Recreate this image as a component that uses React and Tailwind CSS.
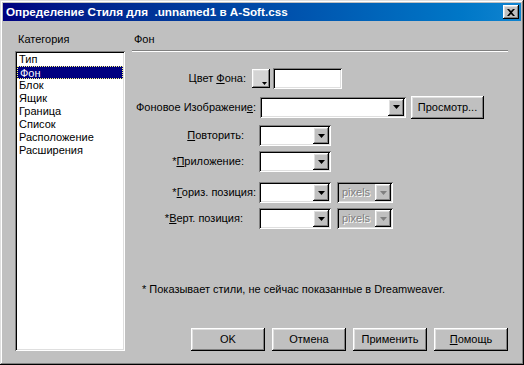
const raised =
  "shadow-[inset_-1px_-1px_#000,inset_1px_1px_#fff,inset_-2px_-2px_#808080,inset_2px_2px_#dfdfdf]";
const sunken =
  "shadow-[inset_1px_1px_#808080,inset_-1px_-1px_#fff,inset_2px_2px_#000,inset_-2px_-2px_#dfdfdf]";

function Arrow({ disabled }) {
  return (
    <svg width="7" height="4" viewBox="0 0 7 4">
      <path d="M0 0h7L3.5 4z" fill={disabled ? "#808080" : "#000"} />
    </svg>
  );
}

function Select({ className, disabled, value }) {
  return (
    <div
      className={`${sunken} ${className} flex h-[21px] items-stretch p-[2px] ${
        disabled ? "bg-[#c0c0c0]" : "bg-white"
      }`}
    >
      <div className="flex-1 pl-[3px] leading-[17px] text-[#808080] [text-shadow:1px_1px_#fff]">
        {value}
      </div>
      <div className={`${raised} flex w-[16px] items-center justify-center bg-[#c0c0c0]`}>
        <Arrow disabled={disabled} />
      </div>
    </div>
  );
}

function Button({ children, className = "" }) {
  return (
    <div
      className={`${raised} ${className} flex h-[23px] items-center justify-center bg-[#c0c0c0] text-[11px] text-black`}
    >
      {children}
    </div>
  );
}

const categories = ["Тип", "Фон", "Блок", "Ящик", "Граница", "Список", "Расположение", "Расширения"];

export default function App() {
  return (
    <div
      className={`flex h-[365px] w-[524px] flex-col bg-[#c0c0c0] p-[3px] text-[11px] text-black shadow-[inset_-1px_-1px_#000,inset_1px_1px_#dfdfdf,inset_-2px_-2px_#808080,inset_2px_2px_#fff]`}
      style={{ fontFamily: '"Liberation Sans", Arial, sans-serif' }}
    >
      {/* Title bar */}
      <div className="flex h-[18px] items-center justify-between bg-gradient-to-r from-[#000080] to-[#1084d0] pl-[3px] pr-[2px]">
        <span className="text-[11.7px] font-bold text-white">
          Определение Стиля для &nbsp;.unnamed1 в A-Soft.css
        </span>
        <div className={`${raised} flex h-[14px] w-[16px] items-center justify-center bg-[#c0c0c0]`}>
          <svg width="8" height="7" viewBox="0 0 8 7">
            <path d="M0 0h2l2 2 2-2h2L5 3.5 8 7H6L4 5 2 7H0l3-3.5z" fill="#000" />
          </svg>
        </div>
      </div>

      <div className="flex flex-1">
        {/* Category column */}
        <div className="ml-[12px] flex flex-col">
          <div className="mt-[12px] pl-[3px] leading-[13px]">Категория</div>
          <div className={`${sunken} mt-[5px] h-[300px] w-[110px] bg-white p-[2px]`}>
            {categories.map((c) => (
              <div
                key={c}
                className={`h-[13px] pl-[2px] leading-[13px] ${
                  c === "Фон"
                    ? "border border-dotted border-[#ffff80] bg-[#000080] pl-[1px] leading-[11px] text-white"
                    : ""
                }`}
              >
                {c}
              </div>
            ))}
          </div>
        </div>

        {/* Panel */}
        <div className="ml-[7px] flex w-[376px] flex-col">
          <div className="mt-[12px] pl-[2px] leading-[13px]">Фон</div>
          <div className="mt-[4px] h-[2px] border-t border-b border-t-[#808080] border-b-white" />

          {/* Цвет фона */}
          <div className="mt-[16px] flex h-[21px] items-center">
            <div className="w-[114px] text-right">
              Цвет <u>Ф</u>она:
            </div>
            <div className={`${raised} relative ml-[6px] h-[19px] w-[18px] bg-[#d4d4d4]`}>
              <div className="absolute bottom-[3px] right-[3px]">
                <svg width="5" height="3" viewBox="0 0 5 3">
                  <path d="M0 0h5L2.5 3z" fill="#000" />
                </svg>
              </div>
            </div>
            <div className={`${sunken} ml-[3px] h-[21px] w-[69px] bg-white`} />
          </div>

          {/* Фоновое изображение */}
          <div className="mt-[7px] flex h-[22px] items-center">
            <div className="w-[124px] text-right">
              Фоновое Изображени<u>е</u>:
            </div>
            <Select className="ml-[4px] w-[146px]" />
            <Button className="ml-[5px] h-[22px] w-[73px]">Просмотр...</Button>
          </div>

          {/* Повторить */}
          <div className="mt-[7px] flex h-[21px] items-center">
            <div className="w-[112px] text-right">
              <u>П</u>овторить:
            </div>
            <Select className="ml-[15px] w-[72px]" />
          </div>

          {/* Приложение */}
          <div className="mt-[5px] flex h-[21px] items-center">
            <div className="w-[112px] text-right">
              *<u>П</u>риложение:
            </div>
            <Select className="ml-[15px] w-[72px]" />
          </div>

          {/* Гориз. позиция */}
          <div className="mt-[10px] flex h-[21px] items-center">
            <div className="w-[124px] text-right">
              *<u>Г</u>ориз. позиция:
            </div>
            <Select className="ml-[3px] w-[72px]" />
            <Select className="ml-[6px] w-[56px]" disabled value="pixels" />
          </div>

          {/* Верт. позиция */}
          <div className="mt-[5px] flex h-[21px] items-center">
            <div className="w-[111px] text-right">
              *<u>В</u>ерт. позиция:
            </div>
            <Select className="ml-[16px] w-[72px]" />
            <Select className="ml-[6px] w-[56px]" disabled value="pixels" />
          </div>

          <div className="mt-[54px] pl-[10px] leading-[13px]">
            * Показывает стили, не сейчас показанные в Dreamweaver.
          </div>

          <div className="mt-[32px] ml-[59px] flex gap-[7px]">
            <Button className="w-[75px]">OK</Button>
            <Button className="w-[75px]">Отмена</Button>
            <Button className="w-[75px]">Применить</Button>
            <Button className="w-[75px]">
              <span>
                <u>П</u>омощь
              </span>
            </Button>
          </div>
        </div>
      </div>
    </div>
  );
}
